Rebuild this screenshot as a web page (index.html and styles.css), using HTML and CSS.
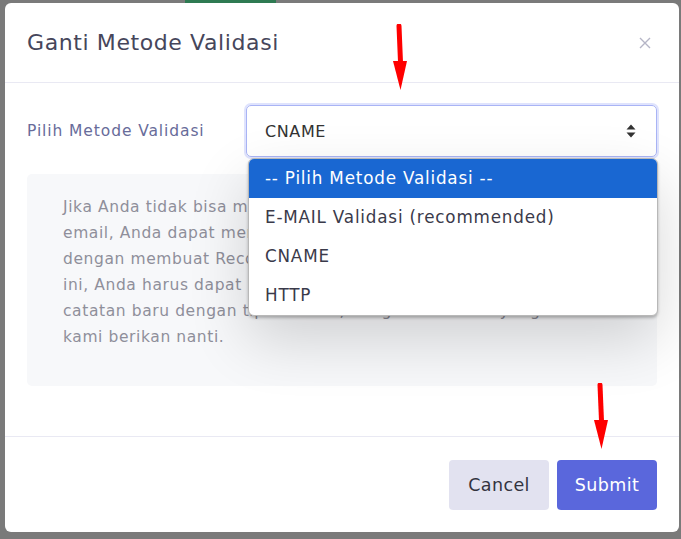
FILE: index.html
```html
<!DOCTYPE html>
<html lang="id">
<head>
<meta charset="utf-8">
<title>Ganti Metode Validasi</title>
<link rel="stylesheet" href="styles.css">
</head>
<body>
<div class="backdrop-strip"></div>
<div class="modal">
  <div class="modal-header">
    <h2 class="modal-title">Ganti Metode Validasi</h2>
    <button class="close-btn" aria-label="Close">
      <svg width="12" height="12" viewBox="0 0 12 12"><path d="M1 1L11 11M11 1L1 11" stroke="#b5b5c6" stroke-width="1.4" fill="none"/></svg>
    </button>
  </div>
  <div class="modal-body">
    <div class="form-row">
      <label class="form-label">Pilih Metode Validasi</label>
      <div class="select-wrap">
        <div class="select">
          <span class="select-value">CNAME</span>
          <svg class="select-arrow" width="10" height="14" viewBox="0 0 10 14"><path d="M5 0.5L9.5 5.5H0.5Z M5 13.5L9.5 8.5H0.5Z" fill="#333"/></svg>
        </div>
        <ul class="dropdown">
          <li class="option selected">-- Pilih Metode Validasi --</li>
          <li class="option">E-MAIL Validasi (recommended)</li>
          <li class="option">CNAME</li>
          <li class="option">HTTP</li>
        </ul>
      </div>
    </div>
    <div class="info-box">
      <p class="info-text">Jika Anda tidak bisa menerima validasi melalui<br>email, Anda dapat memvalidasi kepemilikan domain<br>dengan membuat Record DNS. Untuk melakukan<br>ini, Anda harus dapat mengelola DNS dan menambah<br>catatan baru dengan tipe CNAME, dengan nilai unik yang akan<br>kami berikan nanti.</p>
    </div>
  </div>
  <div class="modal-footer">
    <button class="btn btn-cancel">Cancel</button>
    <button class="btn btn-submit">Submit</button>
  </div>
</div>
<svg class="annot annot-top" width="20" height="72" viewBox="0 0 20 72"><path d="M9 2L10.5 38" stroke="#ff0000" stroke-width="5" stroke-linecap="round" fill="none"/><path d="M3 37L17 37L10.5 66Z" fill="#ff0000"/></svg>
<svg class="annot annot-bottom" width="20" height="72" viewBox="0 0 20 72"><path d="M9 2L10.5 38" stroke="#ff0000" stroke-width="5" stroke-linecap="round" fill="none"/><path d="M3 37L17 37L10.5 66Z" fill="#ff0000"/></svg>
</body>
</html>
```
FILE: styles.css
```css
html, body {
  margin: 0;
  padding: 0;
}
body {
  width: 681px;
  height: 539px;
  overflow: hidden;
  background: #7a7a7a;
  font-family: "DejaVu Sans", "Open Sans", sans-serif;
  position: relative;
}
.backdrop-strip {
  position: absolute;
  left: 185px;
  top: 0;
  width: 91px;
  height: 4px;
  background: #2e7a52;
}
.modal {
  position: relative;
  margin: 3px 0 0 5px;
  width: 674px;
  height: 529px;
  background: #fff;
  border-radius: 6px;
  display: flex;
  flex-direction: column;
}
.modal-header {
  height: 79px;
  padding: 0 28px 0 22px;
  display: flex;
  align-items: center;
  justify-content: space-between;
  border-bottom: 1px solid #e9e9f3;
}
.modal-title {
  margin: 0;
  font-size: 22px;
  font-weight: 400;
  color: #46465b;
  letter-spacing: 0.6px;
}
.close-btn {
  border: 0;
  background: none;
  padding: 0;
  width: 12px;
  height: 12px;
  display: flex;
}
.modal-body {
  flex: 1;
  padding: 22px 22px 0 22px;
}
.form-row {
  display: flex;
  align-items: center;
}
.form-label {
  width: 219px;
  font-size: 15.5px;
  letter-spacing: 0.9px;
  color: #686c9a;
}
.select-wrap {
  position: relative;
  width: 411px;
}
.select {
  box-sizing: border-box;
  height: 52px;
  border: 1px solid #a9b4f5;
  box-shadow: 0 0 0 2px #dfe3fd;
  border-radius: 5px;
  display: flex;
  align-items: center;
  justify-content: space-between;
  padding: 0 20px 0 18px;
  font-size: 16px;
  letter-spacing: 0.6px;
  color: #333;
}
.select-arrow {
  display: block;
}
.dropdown {
  position: absolute;
  left: 2px;
  top: 53px;
  width: 408px;
  margin: 0;
  padding: 0;
  list-style: none;
  background: #fff;
  border: 1px solid #b8b8b8;
  border-radius: 6px;
  overflow: hidden;
  box-shadow: 0 2px 3px rgba(0,0,0,0.25), 0 24px 60px rgba(0,0,0,0.16);
  z-index: 5;
}
.option {
  height: 39px;
  line-height: 39px;
  padding-left: 16px;
  font-size: 16.8px;
  letter-spacing: 0.8px;
  color: #3a3a4a;
}
.option.selected {
  background: #1967d2;
  color: #fff;
}
.info-box {
  margin-top: 17px;
  height: 212px;
  box-sizing: border-box;
  background: #f7f8fa;
  border-radius: 5px;
  padding: 20px 36px 0 36px;
}
.info-text {
  margin: 0;
  font-size: 15.5px;
  line-height: 26px;
  letter-spacing: 0.6px;
  color: #8f8f9a;
  white-space: nowrap;
}
.modal-footer {
  height: 96px;
  box-sizing: border-box;
  border-top: 1px solid #e9e9f3;
  display: flex;
  justify-content: flex-end;
  align-items: center;
  gap: 8px;
  padding: 0 22px;
}
.btn {
  width: 100px;
  height: 50px;
  border: 0;
  border-radius: 4px;
  font-family: inherit;
  font-size: 17.5px;
  letter-spacing: 0.4px;
}
.btn-cancel {
  background: #e2e2f0;
  color: #33333f;
}
.btn-submit {
  background: #5a67dc;
  color: #fff;
}
.annot {
  position: absolute;
  z-index: 10;
}
.annot-top {
  left: 390px;
  top: 24px;
}
.annot-bottom {
  left: 591px;
  top: 383px;
}
```
